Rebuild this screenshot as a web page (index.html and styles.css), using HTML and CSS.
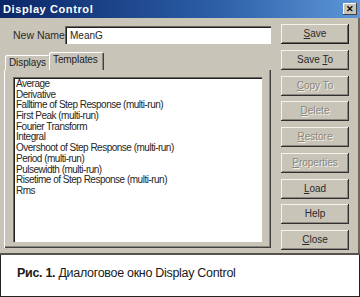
FILE: index.html
```html
<html>
  <head>
    <title>Display Control</title>
    <link rel="stylesheet" href="styles.css">
  </head>
  <body>
    <div class="frame">
      <div class="window">
        <div class="titlebar">
          <span class="title">Display Control</span>
          <span class="close">&#x2715;</span>
        </div>
        <div class="content">
          <div class="left">
            <div class="name-row">
              <span class="label">New Name</span>
              <div class="input">MeanG</div>
            </div>
            <div class="tabs">
              <span class="tab">Displays</span>
              <span class="tab active">Templates</span>
            </div>
            <div class="panel">
              <ul class="list">
                <li>Average</li>
                <li>Derivative</li>
                <li>Falltime of Step Response (multi-run)</li>
                <li>First Peak (multi-run)</li>
                <li>Fourier Transform</li>
                <li>Integral</li>
                <li>Overshoot of Step Response (multi-run)</li>
                <li>Period (multi-run)</li>
                <li>Pulsewidth (multi-run)</li>
                <li>Risetime of Step Response (multi-run)</li>
                <li>Rms</li>
              </ul>
            </div>
          </div>
          <div class="buttons">
            <div class="btn default"><u>S</u>ave</div>
            <div class="btn">Save <u>T</u>o</div>
            <div class="btn disabled"><u>C</u>opy To</div>
            <div class="btn disabled"><u>D</u>elete</div>
            <div class="btn disabled"><u>R</u>estore</div>
            <div class="btn disabled"><u>P</u>roperties</div>
            <div class="btn"><u>L</u>oad</div>
            <div class="btn">Help</div>
            <div class="btn"><u>C</u>lose</div>
          </div>
        </div>
      </div>
      <div class="caption"><b>Рис. 1.</b> Диалоговое окно Display Control</div>
    </div>
  </body>
</html>
```

FILE: styles.css
```css
body {
  margin: 0;
  background: #fff;
}
.frame {
  width: 360px;
  height: 297px;
  display: flex;
  flex-direction: column;
}
.window {
  height: 253px;
  background: #c8c4b8;
  border-bottom: 2px solid #55534c;
  box-shadow: inset -2px 0 0 #6a675e;
  font-family: "Liberation Sans", sans-serif;
  font-size: 10px;
  color: #1e1e1e;
}
.titlebar {
  height: 18px;
  background: linear-gradient(to right, #0b2668, #2c5fa6 60%, #5d97d8);
  display: flex;
  align-items: center;
  justify-content: space-between;
  padding: 0 3px 0 3px;
}
.title {
  color: #fff;
  font-weight: bold;
  font-size: 11px;
  letter-spacing: 0.6px;
}
.close {
  width: 14px;
  height: 12px;
  background: #c8c4b8;
  box-shadow: inset -1px -1px 0 #404040, inset 1px 1px 0 #fff;
  font-size: 9px;
  font-weight: bold;
  line-height: 12px;
  text-align: center;
  color: #000;
}
.content {
  display: flex;
}
.left {
  margin-left: 4px;
  width: 267px;
}
.name-row {
  margin-top: 8px;
  height: 18px;
  display: flex;
  align-items: center;
  padding-left: 9px;
}
.label {
  width: 52px;
  font-size: 10.5px;
  color: #2a2a2a;
}
.input {
  flex: 1;
  height: 18px;
  box-sizing: border-box;
  background: #fff;
  box-shadow: inset 1px 1px 0 #6a675e, inset 2px 2px 0 #202020;
  padding: 4px 0 0 5px;
  font-size: 10px;
}
.tabs {
  margin-top: 8px;
  height: 18px;
  display: flex;
  align-items: flex-end;
  padding-left: 1px;
}
.tab {
  height: 15px;
  padding: 0 4px;
  box-sizing: border-box;
  box-shadow: inset 1px 1px 0 #fff, inset -1px 0 0 #404040;
  border-radius: 2px 2px 0 0;
  font-size: 10px;
  letter-spacing: -0.1px;
  line-height: 15px;
}
.tab.active {
  height: 18px;
  line-height: 16px;
  padding: 0 6px 0 4px;
  margin-left: -1px;
  box-shadow: inset 1px 1px 0 #fff, inset -1px 0 0 #404040, inset -2px 0 0 #8a877e;
}
.panel {
  height: 178px;
  box-sizing: border-box;
  box-shadow: inset 1px 0 0 #fff, inset -1px -1px 0 #404040, inset -2px -2px 0 #8a877e;
  padding: 7px 9px 6px 9px;
}
.list {
  margin: 0;
  height: 165px;
  box-sizing: border-box;
  list-style: none;
  background: #fff;
  box-shadow: inset 1px 1px 0 #6a675e, inset 2px 2px 0 #202020;
  padding: 2px 0 0 3px;
}
.list li {
  height: 10.7px;
  line-height: 10.7px;
  font-size: 10px;
  letter-spacing: -0.5px;
  white-space: nowrap;
  color: #262626;
}
.buttons {
  margin: 6px 0 0 10px;
  width: 68px;
  display: flex;
  flex-direction: column;
  gap: 5.75px;
}
.btn {
  height: 20px;
  box-sizing: border-box;
  background: #c8c4b8;
  box-shadow: inset -1px -1px 0 #303030, inset 1px 1px 0 #f4f2ea, inset -2px -2px 0 #8a877e;
  text-align: center;
  line-height: 19px;
  font-size: 10px;
  color: #2a2a2a;
}
.btn.default {
  box-shadow: inset -1px -1px 0 #202020, inset 1px 1px 0 #f4f2ea, inset -2px -2px 0 #6a675e;
}
.btn.disabled {
  color: #8a877e;
  text-shadow: 1px 1px 0 #f4f2ea;
}
.caption {
  flex: 1;
  border: 1px solid #222;
  border-top: none;
  padding: 11px 0 0 16px;
  font-family: "Liberation Sans", sans-serif;
  font-size: 12.5px;
  letter-spacing: -0.3px;
  color: #1a1a1a;
}
```
